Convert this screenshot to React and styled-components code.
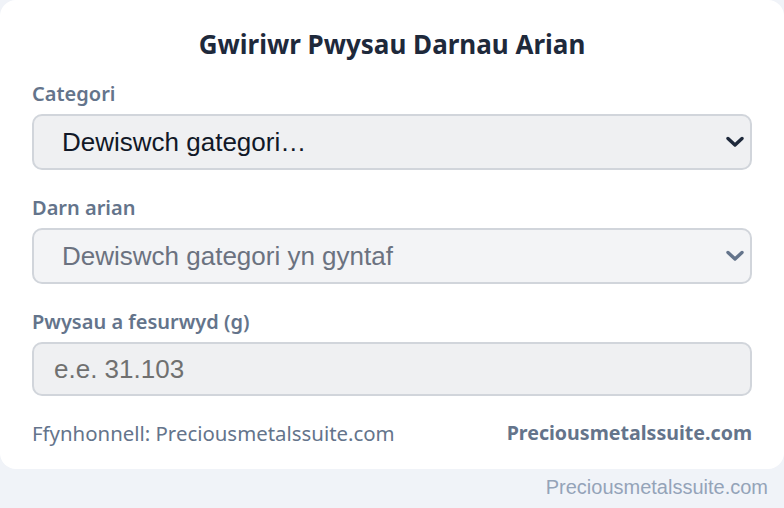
import React from "react";
import styled, { createGlobalStyle } from "styled-components";

const Global = createGlobalStyle`
  html, body { margin: 0; padding: 0; background: #f0f3f8; }
  body { font-family: "Noto Sans", "Open Sans", sans-serif; }
  * { box-sizing: border-box; }
`;

const Page = styled.div`
  width: 784px;
  min-height: 508px;
  display: flex;
  flex-direction: column;
`;

const Card = styled.div`
  background: #ffffff;
  border-radius: 16px;
  padding: 28px 32px 24px 32px;
  display: flex;
  flex-direction: column;
`;

const Title = styled.h1`
  margin: 0 0 22px 0;
  font-size: 26px;
  line-height: 32px;
  font-weight: 700;
  color: #1e293b;
  text-align: center;
`;

const Form = styled.div`
  display: flex;
  flex-direction: column;
  gap: 26px;
`;

const Field = styled.div`
  display: flex;
  flex-direction: column;
  gap: 8px;
`;

const Label = styled.label`
  font-size: 20px;
  line-height: 24px;
  font-weight: 600;
  color: #64748b;
`;

const SelectWrap = styled.div`
  position: relative;
`;

const Select = styled.select`
  appearance: none;
  -webkit-appearance: none;
  width: 100%;
  height: 56px;
  border: 2px solid #d1d5db;
  border-radius: 10px;
  background: ${(p) => (p.disabled ? "#f3f4f6" : "#eff0f2")};
  color: ${(p) => (p.disabled ? "#6b7280" : "#111827")};
  font-family: "Liberation Sans", Arial, sans-serif;
  font-size: 26px;
  padding: 0 48px 0 28px;
  opacity: 1;
  outline: none;
`;

const Chevron = styled.svg`
  position: absolute;
  right: 8px;
  top: 50%;
  transform: translateY(-50%);
  width: 18px;
  height: 12px;
  pointer-events: none;
  color: ${(p) => (p.$muted ? "#64748b" : "#1e293b")};
`;

const Input = styled.input`
  width: 100%;
  height: 54px;
  border: 2px solid #d1d5db;
  border-radius: 10px;
  background: #eff0f2;
  font-family: "Liberation Sans", Arial, sans-serif;
  font-size: 26px;
  padding: 0 20px;
  color: #111827;
  outline: none;
  &::placeholder {
    color: #707070;
  }
`;

const Footer = styled.div`
  margin-top: 25px;
  display: flex;
  justify-content: space-between;
  align-items: center;
  font-size: 20.4px;
  line-height: 24px;
  color: #64748b;
`;

const Source = styled.span`
  font-weight: 400;
`;

const Brand = styled.span`
  font-weight: 700;
  font-size: 19.6px;
`;

const Credit = styled.div`
  align-self: flex-end;
  padding: 6px 16px 0 0;
  font-family: "Liberation Sans", Arial, sans-serif;
  font-size: 20px;
  line-height: 24px;
  color: #94a3b8;
`;

function ChevronIcon({ muted }) {
  return (
    <Chevron $muted={muted} viewBox="0 0 18 12" aria-hidden="true">
      <path d="M2 2.5 L9 9 L16 2.5" fill="none" stroke="currentColor" strokeWidth="3.4" strokeLinecap="round" strokeLinejoin="round" />
    </Chevron>
  );
}

export default function App() {
  return (
    <Page>
      <Global />
      <Card>
        <Title>Gwiriwr Pwysau Darnau Arian</Title>
        <Form>
          <Field>
            <Label>Categori</Label>
            <SelectWrap>
              <Select defaultValue="">
                <option value="">Dewiswch gategori…</option>
              </Select>
              <ChevronIcon />
            </SelectWrap>
          </Field>
          <Field>
            <Label>Darn arian</Label>
            <SelectWrap>
              <Select disabled defaultValue="">
                <option value="">Dewiswch gategori yn gyntaf</option>
              </Select>
              <ChevronIcon muted />
            </SelectWrap>
          </Field>
          <Field>
            <Label>Pwysau a fesurwyd (g)</Label>
            <Input placeholder="e.e. 31.103" />
          </Field>
        </Form>
        <Footer>
          <Source>Ffynhonnell: Preciousmetalssuite.com</Source>
          <Brand>Preciousmetalssuite.com</Brand>
        </Footer>
      </Card>
      <Credit>Preciousmetalssuite.com</Credit>
    </Page>
  );
}
